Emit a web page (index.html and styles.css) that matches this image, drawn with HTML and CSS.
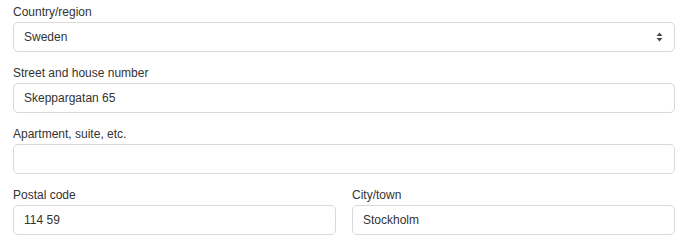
FILE: index.html
```html
<!DOCTYPE html>
<html lang="en">
<head>
  <meta charset="UTF-8" />
  <title>Shipping address</title>
  <link rel="stylesheet" href="styles.css">
</head>
<body>
  <form class="address">
    <div class="field">
      <label for="country">Country/region</label>
      <div class="select-wrap">
        <select id="country">
          <option>Sweden</option>
        </select>
        <svg class="arrows" width="7" height="10" viewBox="0 0 7 10">
          <path d="M3.5 0.5 L6.5 4 H0.5 Z M3.5 9.5 L0.5 6 H6.5 Z" fill="#4a4a4a"/>
        </svg>
      </div>
    </div>

    <div class="field">
      <label for="street">Street and house number</label>
      <input type="text" id="street" value="Skeppargatan 65" />
    </div>

    <div class="field">
      <label for="apt">Apartment, suite, etc.</label>
      <input type="text" id="apt" value="" />
    </div>

    <div class="row">
      <div class="field">
        <label for="zip">Postal code</label>
        <input type="text" id="zip" value="114 59" />
      </div>
      <div class="field">
        <label for="city">City/town</label>
        <input type="text" id="city" value="Stockholm" />
      </div>
    </div>
  </form>
</body>
</html>
```

FILE: styles.css
```css
body {
  margin: 0;
  padding: 4px 13px 0 13px;
  font-family: "Liberation Sans", Arial, sans-serif;
  font-size: 12px;
  color: #333;
  background: #fff;
}

.address {
  display: flex;
  flex-direction: column;
  gap: 13px;
}

.field {
  display: flex;
  flex-direction: column;
  min-width: 0;
}

label {
  line-height: 16px;
  margin-bottom: 2px;
  color: #333;
}

input[type="text"],
select {
  box-sizing: border-box;
  width: 100%;
  height: 30px;
  padding: 0 10px;
  font: inherit;
  color: #333;
  background: #fff;
  border: 1px solid #d9d9d9;
  border-radius: 5px;
  outline: none;
}

select {
  appearance: none;
  -webkit-appearance: none;
}

.select-wrap {
  position: relative;
}

.arrows {
  position: absolute;
  right: 12px;
  top: 10px;
  pointer-events: none;
}

.row {
  display: grid;
  grid-template-columns: 1fr 1fr;
  gap: 16px;
}
```
